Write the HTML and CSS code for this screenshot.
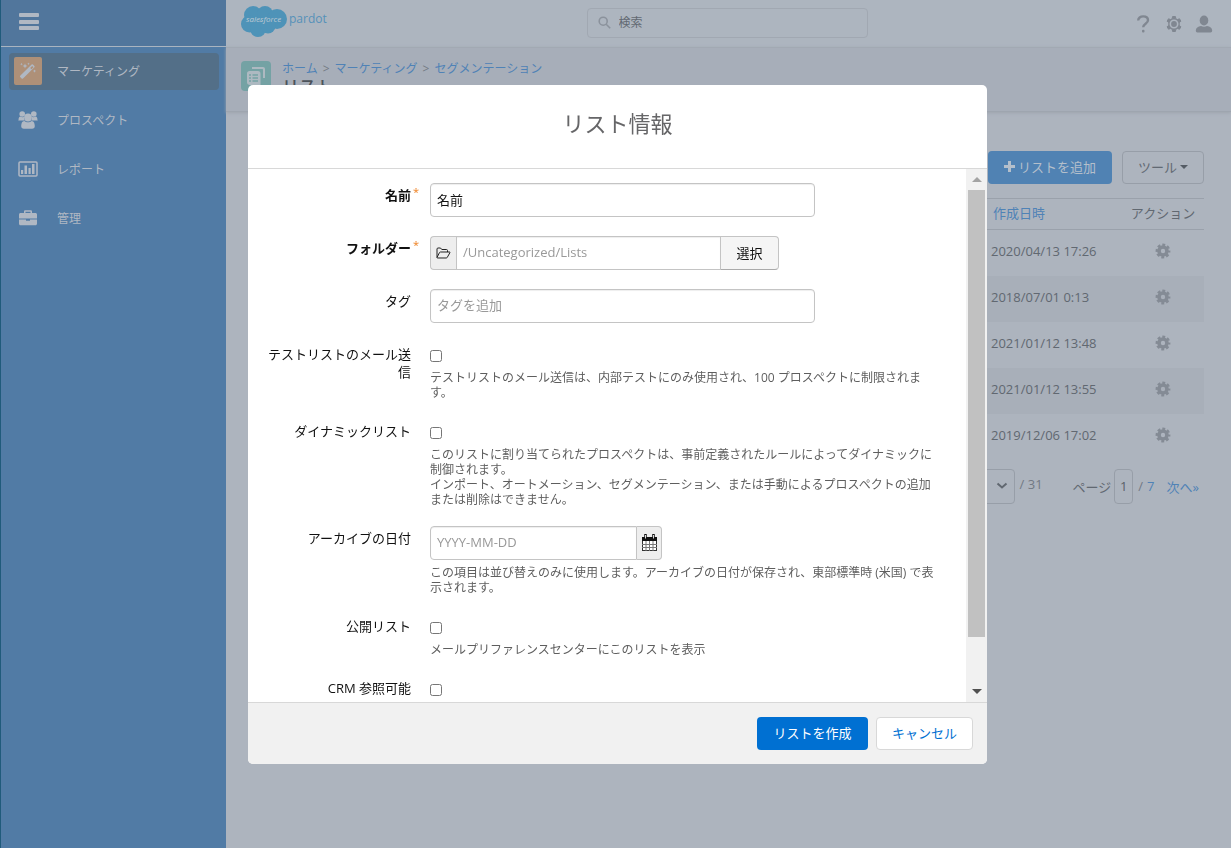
FILE: index.html
```html
<!DOCTYPE html>
<html lang="ja">
<head>
<meta charset="utf-8">
<meta name="viewport" content="width=device-width, initial-scale=1">
<title>リスト - Pardot</title>
<link rel="stylesheet" href="styles.css">
</head>
<body>
<svg class="defs" aria-hidden="true">
  <symbol id="cog" viewBox="0 0 16 16">
    <circle cx="8" cy="8" r="4" fill="none" stroke="currentColor" stroke-width="3.6"/>
    <circle cx="8" cy="8" r="6.2" fill="none" stroke="currentColor" stroke-width="2.4" stroke-dasharray="2.9 1.97" stroke-dashoffset="1.45"/>
  </symbol>
</svg>

<div class="app">
  <aside class="sidebar">
    <div class="sidebar-top">
      <button class="menu-button" type="button" aria-label="メニュー">
        <svg width="22" height="18" viewBox="0 0 22 18" fill="currentColor"><rect x="1" y="0" width="20" height="4" rx="1"/><rect x="1" y="7" width="20" height="4" rx="1"/><rect x="1" y="13" width="20" height="4" rx="1"/></svg>
      </button>
    </div>
    <nav class="nav">
      <a class="nav-item active" href="#">
        <span class="nav-icon"><svg width="18" height="18" viewBox="0 0 18 18" fill="currentColor"><path d="M2.6 16.4 1.2 15a1 1 0 0 1 0-1.3L12.6 2.6a1 1 0 0 1 1.3 0l1.5 1.400a1 1 0 0 1 0 1.300L4 16.400a1 1 0 0 1-1.400 0zM11.200 6l1.200 1.200 2-2L13.200 4z" fill-rule="evenodd"/><path d="m6 1.500.7 1.800 1.800.7-1.800.7L6 6.500l-.7-1.800L3.500 4l1.800-.7zM2.500.8l.4 1 1 .4-1 .4-.4 1-.4-1-1-.4 1-.4zM9.500.5l.4.9.9.4-.9.4-.4.9-.4-.9-.9-.4.9-.4zM15.500 7.500l.5 1.100 1.100.5-1.100.5-.5 1.100-.5-1.100-1.100-.5 1.100-.5z"/></svg></span>
        <span>マーケティング</span>
      </a>
      <a class="nav-item" href="#">
        <span class="nav-icon"><svg width="20" height="18" viewBox="0 0 20 18" fill="currentColor"><circle cx="4.200" cy="3" r="2.800"/><circle cx="15.800" cy="3" r="2.800"/><path d="M.5 9.500c0-2.500.7-4 2-4 1 .9 2.700.9 3.500.2-.2 1.500.1 2.700.8 3.800H2C1 9.500.5 9.900.5 9.500zM19.500 9.500c0-2.500-.7-4-2-4-1 .9-2.700.9-3.500.2.2 1.500-.1 2.700-.8 3.800H18c1 0 1.500.4 1.500 0z"/><circle cx="10" cy="6.500" r="3.900"/><path d="M6.300 9.900C4 10 3.300 12.200 3.200 15c0 1.800 1 2.700 2.700 2.700h8.200c1.700 0 2.700-.9 2.700-2.700-.1-2.800-.8-5-3.100-5.100-2 1.800-5.400 1.800-7.400 0z"/></svg></span>
        <span>プロスペクト</span>
      </a>
      <a class="nav-item" href="#">
        <span class="nav-icon"><svg width="20" height="16" viewBox="0 0 20 16" fill="currentColor"><rect x="1" y="1" width="18" height="14" rx="1" fill="none" stroke="currentColor" stroke-width="1.500"/><path d="M3 9h2.200v4H3zM6.500 4.500h2.500V13H6.500zM10.500 7h2.200v6h-2.200zM14 3h2.500v10H14z"/></svg></span>
        <span>レポート</span>
      </a>
      <a class="nav-item" href="#">
        <span class="nav-icon"><svg width="18" height="16" viewBox="0 0 18 16" fill="currentColor"><path d="M1.500 3H5V1.500C5 .8 5.600.3 6.300.3h5.400c.7 0 1.300.5 1.300 1.200V3h3.500c.8 0 1.500.7 1.500 1.500v4H0v-4C0 3.700.7 3 1.500 3zm5-1.300V3h5V1.700zM0 9.400h7v1.300h4V9.400h7v4.300c0 .8-.7 1.500-1.500 1.500h-15C.7 15.200 0 14.500 0 13.700z"/></svg></span>
        <span>管理</span>
      </a>
    </nav>
  </aside>

  <div class="page">
    <header class="topbar">
      <a class="logo" href="#" aria-label="salesforce pardot">
        <svg width="92" height="36" viewBox="0 0 92 36">
          <g fill="#4e93b8"><circle cx="12" cy="10" r="9"/><circle cx="24" cy="9" r="8"/><circle cx="36" cy="14" r="10"/><circle cx="8.500" cy="19" r="8.500"/><circle cx="17" cy="24" r="8"/><circle cx="27" cy="21" r="7.500"/></g>
          <text x="5" y="17" class="logo-cloud">salesforce</text>
          <text x="48" y="18" class="logo-name">pardot</text>
        </svg>
      </a>
      <label class="search">
        <svg width="13" height="13" viewBox="0 0 13 13" fill="none" stroke="currentColor" stroke-width="1.600"><circle cx="5.200" cy="5.200" r="4"/><path d="m8.200 8.200 4 4"/></svg>
        <input type="search" placeholder="検索" aria-label="検索">
      </label>
      <div class="top-actions">
        <button type="button" aria-label="ヘルプ"><svg width="18" height="18" viewBox="0 0 18 18"><path d="M3.200 5.500C3.200 2.900 5.400 1.400 8.200 1.400s4.800 1.500 4.800 3.900c0 3.400-4.800 3.500-4.800 7" fill="none" stroke="currentColor" stroke-width="2.400"/><rect x="7" y="14.800" width="2.500" height="2.600" rx="1" fill="currentColor"/></svg></button>
        <button type="button" aria-label="設定"><svg width="18" height="18" viewBox="0 0 18 18" fill="none" stroke="currentColor"><path d="M7.600 1.500h2.800l.4 2.200 1.500.9 2.200-.8 1.400 2.400-1.700 1.500v2.600l1.700 1.500-1.400 2.400-2.200-.8-1.500.9-.4 2.200H7.600l-.4-2.200-1.500-.9-2.200.8-1.400-2.400 1.700-1.500V7.700L2.100 6.200l1.400-2.400 2.200.8 1.500-.9z" fill="currentColor"/><circle cx="9" cy="9" r="3.700" stroke="#adb5bf" stroke-width="1.600"/><circle cx="9" cy="9" r="1.600" fill="currentColor"/></svg></button>
        <button type="button" aria-label="ユーザー"><svg width="18" height="18" viewBox="0 0 18 18" fill="currentColor"><ellipse cx="9" cy="5.500" rx="4.300" ry="5"/><path d="M.8 15.500c0-2.700 2.200-4 5.200-4.500 1.900 1 4.100 1 6 0 3 .5 5.200 1.800 5.200 4.500 0 1.300-.6 2-1.700 2h-13c-1.100 0-1.700-.7-1.700-2z"/></svg></button>
      </div>
    </header>

    <div class="page-head">
      <span class="list-icon"><svg width="20" height="20" viewBox="0 0 20 20" fill="currentColor"><path d="M6 1h11c1.200 0 2 .8 2 2v9h-2V4c0-.7-.3-1-1-1H6zM3.500 5h8.500c1.600 0 2.500 1 2.500 2.500V19H4c-1.700 0-3-1-3-2.500v-9C1 6 2 5 3.500 5z"/><path d="M3 9h2M6.500 9H12M3 12h2m1.500 0H12M3 15h2m1.500 0H12" stroke="#74a2a4" stroke-width="1.600"/></svg></span>
      <div>
        <nav class="crumbs"><a href="#">ホーム</a><i>&gt;</i><a href="#">マーケティング</a><i>&gt;</i><a href="#">セグメンテーション</a></nav>
        <h1>リスト</h1>
      </div>
    </div>

    <main class="content">
      <div class="toolbar">
        <button class="add" type="button"><svg width="11" height="11" viewBox="0 0 11 11"><path d="M5.500 0v11M0 5.500h11" stroke="currentColor" stroke-width="3"/></svg>リストを追加</button>
        <button class="tools" type="button">ツール<span class="caret"></span></button>
      </div>
      <table class="lists">
        <thead><tr><th></th><th class="date"><a href="#">作成日時</a></th><th class="action">アクション</th></tr></thead>
        <tbody>
          <tr><td></td><td class="date">2020/04/13 17:26</td><td class="action"><svg width="16" height="16"><use href="#cog"/></svg></td></tr>
          <tr><td></td><td class="date">2018/07/01 0:13</td><td class="action"><svg width="16" height="16"><use href="#cog"/></svg></td></tr>
          <tr><td></td><td class="date">2021/01/12 13:48</td><td class="action"><svg width="16" height="16"><use href="#cog"/></svg></td></tr>
          <tr><td></td><td class="date">2021/01/12 13:55</td><td class="action"><svg width="16" height="16"><use href="#cog"/></svg></td></tr>
          <tr><td></td><td class="date">2019/12/06 17:02</td><td class="action"><svg width="16" height="16"><use href="#cog"/></svg></td></tr>
        </tbody>
      </table>
      <div class="pager">
        <span class="select-wrap"><select aria-label="表示件数"></select><svg width="12" height="8" viewBox="0 0 12 8"><path d="m1.500 1.500 4.500 4 4.500-4" fill="none" stroke="currentColor" stroke-width="2"/></svg></span>
        <span class="total">/ 31</span>
        <label class="page-label" for="page-no">ページ</label>
        <input class="page-no" id="page-no" type="text" value="1">
        <span class="slash">/</span><a href="#">7</a><a class="next" href="#">次へ»</a>
      </div>
    </main>
  </div>
</div>

<div class="backdrop">
  <section class="modal" role="dialog" aria-modal="true" aria-labelledby="modal-title">
    <header class="modal-head"><h2 id="modal-title">リスト情報</h2></header>
    <div class="modal-body">
      <form class="form" id="list-form">
        <div class="row">
          <label class="required" for="name">名前</label>
          <div class="field"><input class="text" id="name" type="text" value="名前"></div>
        </div>
        <div class="row">
          <label class="required" for="folder">フォルダー</label>
          <div class="field folder">
            <span class="addon"><svg width="15" height="12" viewBox="0 0 15 12" fill="none" stroke="#222" stroke-width="1"><path d="M1 10.500V2c0-.6.4-1 1-1h2.500l1.300 1.500h4.700c.6 0 1 .4 1 1V5M1 10.500 3.500 5.500c.2-.3.500-.5.9-.5h9.100c.5 0 .7.300.4.700l-2.600 4.600c-.2.400-.5.700-1 .7H1.500c-.3 0-.5-.2-.5-.5z"/></svg></span>
            <input class="text" id="folder" type="text" placeholder="/Uncategorized/Lists">
            <button class="choose" type="button">選択</button>
          </div>
        </div>
        <div class="row">
          <label for="tags">タグ</label>
          <div class="field"><input class="text" id="tags" type="text" placeholder="タグを追加"></div>
        </div>
        <div class="row">
          <label for="test">テストリストのメール送信</label>
          <div class="field"><input class="check" id="test" type="checkbox">
            <p class="hint">テストリストのメール送信は、内部テストにのみ使用され、100 プロスペクトに制限されます。</p></div>
        </div>
        <div class="row">
          <label for="dynamic">ダイナミックリスト</label>
          <div class="field"><input class="check" id="dynamic" type="checkbox">
            <p class="hint">このリストに割り当てられたプロスペクトは、事前定義されたルールによってダイナミックに制御されます。<br>インポート、オートメーション、セグメンテーション、または手動によるプロスペクトの追加または削除はできません。</p></div>
        </div>
        <div class="row">
          <label for="archive">アーカイブの日付</label>
          <div class="field">
            <div class="date-input"><input class="text" id="archive" type="text" placeholder="YYYY-MM-DD"><button class="calendar" type="button" aria-label="カレンダー"><svg width="17" height="18" viewBox="0 0 17 18"><rect x="1.500" y="3.500" width="14" height="13" fill="#fff" stroke="#333"/><path d="M1 3h15v4H1z" fill="#111"/><path d="M4.500 0v5M12.500 0v5" stroke="#111" stroke-width="2.500"/><path d="M4.500 1v3.500M12.500 1v3.500" stroke="#ddd"/><path d="M1 10.500h15M1 13.500h15M5 7v10M8.500 7v10M12 7v10" stroke="#777"/></svg></button></div>
            <p class="hint after-input">この項目は並び替えのみに使用します。アーカイブの日付が保存され、東部標準時 (米国) で表示されます。</p></div>
        </div>
        <div class="row">
          <label for="public">公開リスト</label>
          <div class="field"><input class="check" id="public" type="checkbox">
            <p class="hint">メールプリファレンスセンターにこのリストを表示</p></div>
        </div>
        <div class="row">
          <label for="crm">CRM 参照可能</label>
          <div class="field"><input class="check" id="crm" type="checkbox"></div>
        </div>
      </form>
      <div class="scrollbar" aria-hidden="true"><span class="arrow up"></span><span class="track"><span class="thumb"></span></span><span class="arrow down"></span></div>
    </div>
    <footer class="modal-foot">
      <button class="primary" type="submit" form="list-form">リストを作成</button>
      <button class="cancel" type="button">キャンセル</button>
    </footer>
  </section>
</div>
</body>
</html>
```
FILE: styles.css
```css
* { box-sizing: border-box; }
html, body { height: 100%; }
body, button, input, select {
  font-family: "Open Sans", "Noto Sans CJK JP", sans-serif;
  font-size: 13px;
}
body { margin: 0; color: #616871; background: #adb4be; overflow: hidden; }
a { color: #4f82b6; text-decoration: none; }
button { cursor: pointer; padding: 0; border: 0; background: none; }
svg { display: block; flex: none; }
.defs { position: absolute; width: 0; height: 0; }

.app { display: flex; min-height: 100%; }
.sidebar { width: 226px; flex: none; background: #517ba5; border-left: 1px solid #205b7b; color: #b0b8c3; }
.sidebar-top { height: 47px; padding: 13px 17px; background: #51769c; border-bottom: 1px solid #a9b4c0; }
.menu-button { color: #b0b8c3; display: block; }
.nav { display: flex; flex-direction: column; gap: 12px; padding: 6px 7px 0 8px; }
.nav-item { display: flex; align-items: center; gap: 15px; height: 37px; padding: 0 0 2px 5px; border-radius: 4px; color: #b0b8c3; font-size: 12px; }
.nav-icon { display: grid; place-items: center; width: 28px; height: 28px; border-radius: 2px; }
.active { background: #536f88; }
.active .nav-icon { background: #ae9078; }

.page { flex: 1; min-width: 0; }
.topbar { display: flex; justify-content: space-between; height: 47px; padding: 0 18px 0 15px; background: #adb5bf; }
.logo { padding-top: 5px; flex: 1; }
.logo-cloud { font: italic 8px "Open Sans", sans-serif; fill: #bfcad4; }
.logo-name { font: 12px "Open Sans", sans-serif; fill: #5591b9; }
.search { display: flex; align-items: center; gap: 8px; width: 281px; height: 30px; margin-top: 8px; padding: 0 10px 2px; border: 1px solid #a1a8b2; border-radius: 4px; color: #8b929c; }
.search input { flex: 1; min-width: 0; border: 0; padding: 0; background: none; outline: 0; font-size: 12px; }
.search input::placeholder { color: #626972; opacity: 1; }
.top-actions { flex: 1; display: flex; justify-content: flex-end; align-items: center; gap: 12px; }
.top-actions button { color: #808791; }
.page-head { display: flex; gap: 11px; height: 65px; padding: 13px 15px 0; background: #a7aeb9; border-top: 1px solid #a2a9b3; border-bottom: 1px solid #9ea5af; box-shadow: 0 1px 3px #9da4ae; }
.list-icon { display: grid; place-items: center; flex: none; width: 30px; height: 30px; border-radius: 4px; background: #74a2a4; color: #adb9c1; }
.crumbs { font-size: 12px; line-height: 16px; }
.crumbs i { font-style: normal; margin: 0 5px; color: #747b84; }
.page-head h1 { margin: 0; font-size: 17px; line-height: 20px; font-weight: 500; color: #4c535b; }
.content { padding: 39px 27px 0 24px; }
.toolbar { display: flex; justify-content: flex-end; gap: 10px; }
.toolbar button { height: 33px; padding-bottom: 2px; border-radius: 4px; display: flex; align-items: center; justify-content: center; }
.toolbar .add { gap: 3px; width: 124px; background: #5082b3; color: #b4bfcb; }
.toolbar .tools { gap: 3px; width: 82px; border: 1px solid #979ea8; color: #626973; }
.caret { border: 4px solid transparent; border-top-color: #555c65; border-bottom: 0; }
.lists { width: 100%; margin-top: 14px; border-collapse: collapse; table-layout: fixed; }
.lists th { height: 31px; padding: 0 0 4px; font-weight: 400; border-top: 1px solid #9aa1ab; border-bottom: 1px solid #9aa1ab; }
.lists td { height: 46px; padding: 0 0 4px; }
.lists tbody tr:nth-child(even) { background: #a8afb9; }
.lists .date { width: 137px; padding-left: 6px; text-align: left; }
.lists th.date { padding-left: 8px; }
.lists .action { width: 82px; text-align: center; }
.lists .action svg { margin: auto; color: #848b95; }
.pager { display: flex; justify-content: flex-end; align-items: center; margin-top: 9px; padding-right: 5px; }
.select-wrap { display: flex; align-items: center; justify-content: flex-end; width: 60px; height: 35px; padding-right: 6px; border: 1px solid #979ea8; border-radius: 4px; }
.select-wrap select { flex: 1; min-width: 0; appearance: none; border: 0; background: none; }
.total { margin: 0 30px 0 5px; padding-bottom: 4px; color: #727984; }
.page-no { width: 19px; height: 35px; margin: 0 5px 0 3px; padding: 0; text-align: center; color: #596068; background: none; border: 1px solid #979ea8; border-radius: 4px; }
.slash { margin-right: 4px; color: #727984; }
.next { margin-left: 12px; }

.backdrop { position: fixed; inset: 0; display: flex; justify-content: center; padding: 85px 0 84px 4px; }
.modal { display: flex; flex-direction: column; width: 60%; min-width: 739px; background: #fff; border-radius: 5px; overflow: hidden; color: #111; }
.modal-head { flex: none; height: 84px; display: flex; justify-content: center; padding-top: 22px; border-bottom: 1px solid #d8d8d8; }
.modal-head h2 { margin: 0; font-size: 22px; line-height: 32px; font-weight: 400; color: #666668; }
.modal-body { flex: 1; min-height: 0; display: flex; overflow: hidden; }
.form { flex: 1; display: flex; flex-direction: column; gap: 19px; padding: 14px 16px 0 18px; }
.row { display: grid; grid-template-columns: 145px 1fr; gap: 19px; }
.row label { padding-top: 3px; line-height: 18px; text-align: right; }
.required { position: relative; font-weight: 700; }
.required::after { content: "*"; position: absolute; left: 100%; top: 0; margin-left: 2px; color: #ee8122; font-size: 11px; font-weight: 400; }
.text { display: block; width: 100%; max-width: 385px; height: 34px; padding: 0 6px 2px; border: 1px solid #c4c4c4; border-radius: 4px; color: #111; background: #fff; box-shadow: inset 0 1px 1px #eee; }
.text::placeholder { color: #999; opacity: 1; }
.folder { display: flex; max-width: 349px; }
.addon { display: grid; place-items: center; flex: none; width: 26px; border: 1px solid #c4c4c4; border-right: 0; border-radius: 4px 0 0 4px; background: #eee; }
.folder .text { flex: 1; min-width: 0; border-radius: 0; }
.choose { width: 58px; padding-bottom: 2px; border: 1px solid #c4c4c4; border-bottom-color: #aaa; border-left: 0; border-radius: 0 4px 4px 0; background: #f5f5f5; color: #111; }
.check { display: block; width: 12px; height: 12px; margin: 8px 0; }
.hint { margin: 0; max-width: 507px; font-size: 12px; line-height: 15px; color: #5e5e5e; }
.after-input { margin-top: 5px; }
.date-input { display: flex; max-width: 232px; }
.date-input .text { flex: 1; min-width: 0; border-radius: 4px 0 0 4px; }
.calendar { display: grid; place-items: center; width: 25px; border: 1px solid #c4c4c4; border-left: 0; border-radius: 0 4px 4px 0; background: #eee; }
.scrollbar { flex: none; display: flex; flex-direction: column; width: 21px; background: #f1f1f1; padding: 0 2px; }
.arrow { height: 21px; display: grid; place-items: center; }
.arrow::before { content: ""; border: 5px solid transparent; }
.up::before { border-top: 0; border-bottom-color: #a3a3a3; }
.down::before { border-bottom: 0; border-top-color: #505050; }
.track { flex: 1; }
.thumb { display: block; height: 91%; background: #c1c1c1; }
.modal-foot { flex: none; display: flex; justify-content: flex-end; gap: 8px; height: 62px; padding: 14px; border-top: 1px solid #d8d8d8; background: #f1f1f1; }
.modal-foot button { height: 33px; padding-bottom: 2px; border-radius: 4px; }
.primary { width: 111px; background: #0070d2; color: #fff; }
.modal-foot .cancel { width: 97px; border: 1px solid #d8d8d8; background: #fff; color: #0070d2; }
```
